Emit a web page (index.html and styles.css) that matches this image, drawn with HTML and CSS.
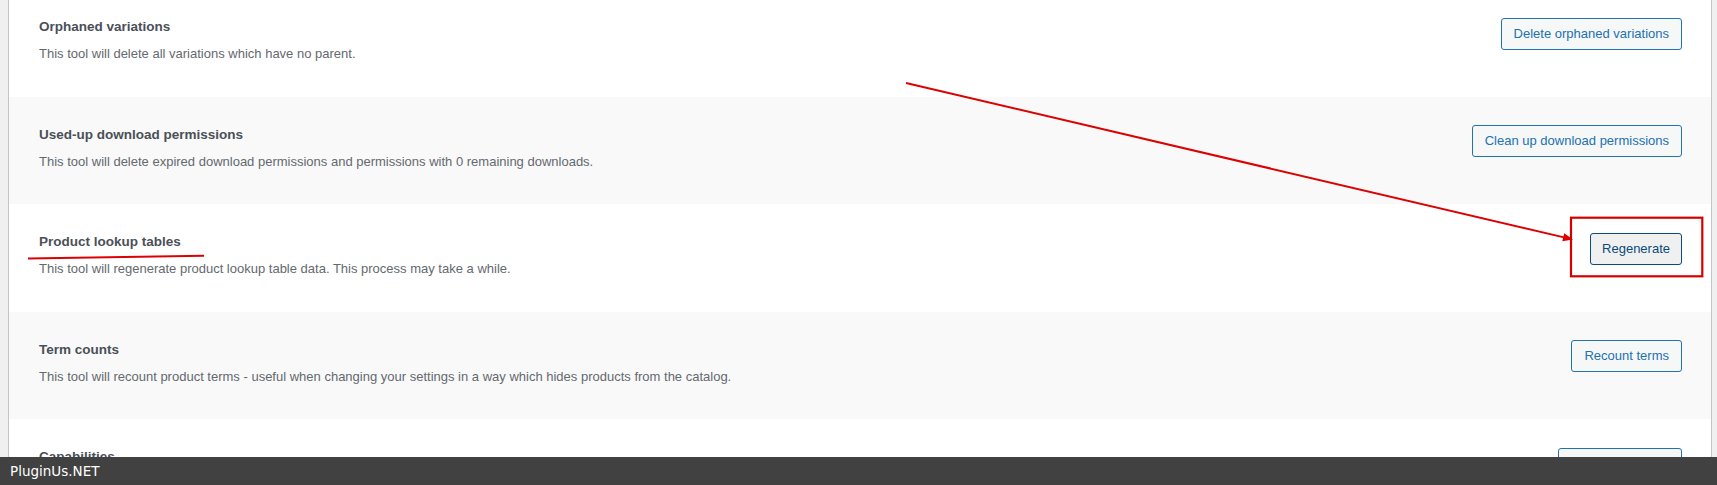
FILE: index.html
```html
<!DOCTYPE html>
<html lang="en">
<head>
<meta charset="utf-8">
<title>Tools</title>
<link rel="stylesheet" href="styles.css">
</head>
<body>
<div class="tools">
  <div class="tool">
    <div class="tool-info">
      <strong class="tool-name">Orphaned variations</strong>
      <p class="tool-desc">This tool will delete all variations which have no parent.</p>
    </div>
    <div class="tool-action"><button class="btn" type="button">Delete orphaned variations</button></div>
  </div>
  <div class="tool">
    <div class="tool-info">
      <strong class="tool-name">Used-up download permissions</strong>
      <p class="tool-desc">This tool will delete expired download permissions and permissions with 0 remaining downloads.</p>
    </div>
    <div class="tool-action"><button class="btn" type="button">Clean up download permissions</button></div>
  </div>
  <div class="tool">
    <div class="tool-info">
      <strong class="tool-name">Product lookup tables</strong>
      <p class="tool-desc">This tool will regenerate product lookup table data. This process may take a while.</p>
    </div>
    <div class="tool-action"><button class="btn btn--focus" type="button">Regenerate</button></div>
  </div>
  <div class="tool">
    <div class="tool-info">
      <strong class="tool-name">Term counts</strong>
      <p class="tool-desc">This tool will recount product terms - useful when changing your settings in a way which hides products from the catalog.</p>
    </div>
    <div class="tool-action"><button class="btn" type="button">Recount terms</button></div>
  </div>
  <div class="tool">
    <div class="tool-info">
      <strong class="tool-name">Capabilities</strong>
    </div>
    <div class="tool-action"><button class="btn btn--tight" type="button">Reset capabilities</button></div>
  </div>
</div>

<svg class="annotations" width="1717" height="485" viewBox="0 0 1717 485" aria-hidden="true">
  <line x1="906" y1="83" x2="1564" y2="237.4" stroke="#dd0000" stroke-width="2"/>
  <polygon points="1573,239.5 1562.3,241.2 1564.2,233.3" fill="#dd0000"/>
  <rect x="1571" y="217.7" width="131.3" height="58.6" fill="none" stroke="#d40000" stroke-width="2.2"/>
  <path d="M28 258.4 L204 255.7" stroke="#dd0000" stroke-width="2" fill="none"/>
</svg>

<div class="watermark">PluginUs.NET</div>
</body>
</html>
```

FILE: styles.css
```css
html,
body {
  margin: 0;
  padding: 0;
}

body {
  position: relative;
  width: 1717px;
  height: 485px;
  overflow: hidden;
  background: #f0f0f1;
  font-family: "Liberation Sans", Arial, sans-serif;
  color: #3c434a;
}

.tools {
  margin: -10.75px 5px 0 8px;
  border-left: 1px solid #c3c4c7;
  border-right: 1px solid #c3c4c7;
  background: #fff;
}

.tool {
  display: flex;
  justify-content: space-between;
  align-items: flex-start;
  box-sizing: border-box;
  height: 107.5px;
  padding: 28px 29px 0 30px;
  background: #fff;
}

.tool:nth-child(even) {
  background: #f9f9f9;
}

.tool-info {
  display: flex;
  flex-direction: column;
}

.tool-name {
  display: block;
  font-size: 13.5px;
  font-weight: 700;
  line-height: 20px;
  color: #4a5057;
  margin-bottom: 7px;
}

.tool-desc {
  margin: 0;
  font-size: 13px;
  line-height: 20px;
  color: #646970;
}

.tool-action {
  padding-top: 0.5px;
}

.btn {
  box-sizing: border-box;
  min-height: 32px;
  padding: 0 12px;
  border: 1px solid #2271b1;
  border-radius: 3px;
  background: #f6f7f7;
  color: #2271b1;
  font-family: "Liberation Sans", Arial, sans-serif;
  font-size: 13px;
  line-height: 30px;
  white-space: nowrap;
  cursor: pointer;
}

.btn--tight {
  padding: 0 10px;
}

.btn--focus {
  padding: 0 11px;
  background: #f0f0f1;
  border-color: #0a4b78;
  color: #0a4b78;
}

.annotations {
  position: absolute;
  top: 0;
  left: 0;
  pointer-events: none;
}

.watermark {
  position: absolute;
  left: 0;
  right: 0;
  bottom: 0;
  height: 28px;
  padding-left: 10px;
  background: #414141;
  color: #ffffff;
  font-family: "DejaVu Sans", sans-serif;
  font-size: 13.5px;
  line-height: 28px;
}
```
